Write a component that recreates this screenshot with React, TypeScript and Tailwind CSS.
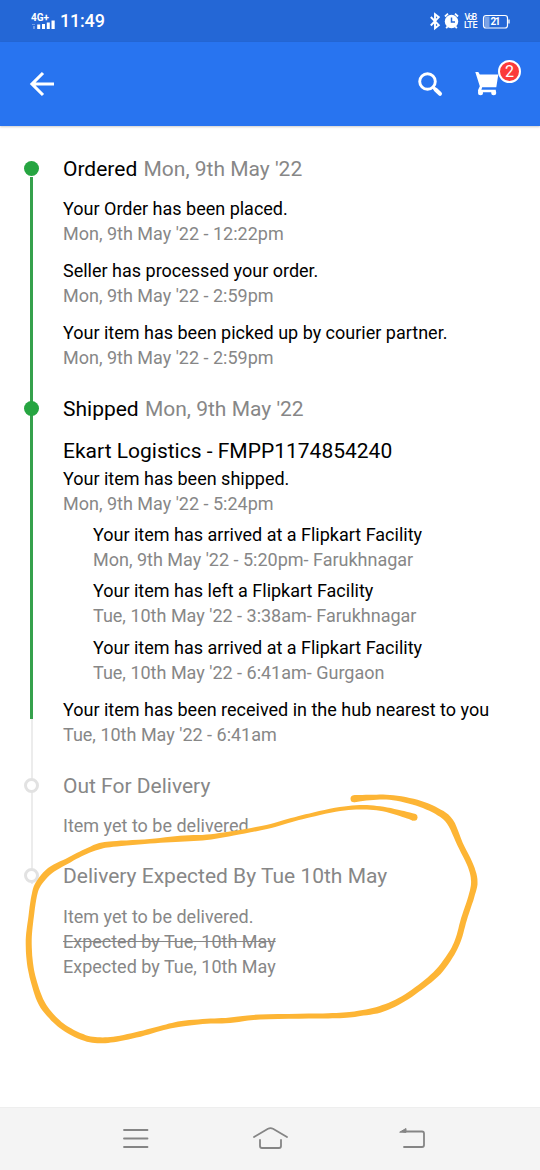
import React from "react";

type Pt = [number, number, number];

// Hand-drawn marker: centre points with the stroke width at each of them.
const marker: Pt[] = [
  [354, 798.7, 7], [373.3, 797.3, 5.2], [393.3, 797.7, 5], [416.7, 802.7, 6], [436.7, 811, 6.5],
  [450, 821.7, 7], [460, 844, 6], [470.7, 866, 6], [474.3, 881.7, 6.5], [471.3, 896.7, 6],
  [464, 919, 6], [458.7, 938.3, 6], [451.7, 953.3, 6], [438.3, 971.7, 6.5], [420, 987.3, 6],
  [400, 1000.7, 6], [380, 1009.3, 6.5], [360, 1013.3, 5.5], [343.3, 1015.3, 5.5], [316.7, 1016, 5],
  [260, 1017, 5], [230, 1020.3, 5.5], [206.7, 1021.3, 5], [181.7, 1023.7, 5.5], [163.3, 1027.7, 5],
  [140, 1034, 5.5], [116.7, 1039, 5.5], [100, 1040.3, 6], [85, 1038, 6], [66.7, 1029.3, 6],
  [53.3, 1018.3, 6], [41.7, 1003.3, 6.5], [34.3, 983.3, 6], [30, 963.3, 6], [28.7, 940, 6],
  [30.7, 920, 5.5], [34, 896.7, 5.5], [38.3, 884, 6], [50, 870.7, 6.5], [66.7, 861.3, 5.5],
  [83.3, 852.7, 5.2], [100, 846, 6], [116.7, 843.7, 5.5], [150, 841.3, 4.5], [180, 838.7, 6],
  [206.7, 837.3, 5.5], [233.3, 833.3, 4.5], [266.7, 827, 4], [288, 821, 4], [310, 815.3, 4],
  [340, 809, 4], [363.3, 807.3, 4.5], [383.3, 809, 4.5], [403.3, 814, 6], [414, 817.3, 7],
];

function smooth(points: Pt[], steps = 6): Pt[] {
  const out: Pt[] = [];
  for (let i = 0; i < points.length - 1; i++) {
    const p = [points[Math.max(0, i - 1)], points[i], points[i + 1], points[Math.min(points.length - 1, i + 2)]];
    for (let s = 0; s < steps; s++) {
      const t = s / steps;
      out.push(
        [0, 1, 2].map(
          (k) =>
            0.5 *
            (2 * p[1][k] +
              (p[2][k] - p[0][k]) * t +
              (2 * p[0][k] - 5 * p[1][k] + 4 * p[2][k] - p[3][k]) * t * t +
              (3 * p[1][k] - p[0][k] - 3 * p[2][k] + p[3][k]) * t * t * t),
        ) as Pt,
      );
    }
  }
  out.push(points[points.length - 1]);
  return out;
}

function outline(points: Pt[]): string {
  const pts = smooth(points);
  const left: string[] = [];
  const right: string[] = [];
  pts.forEach(([x, y, w], i) => {
    const a = pts[Math.max(0, i - 1)];
    const b = pts[Math.min(pts.length - 1, i + 1)];
    const len = Math.hypot(b[0] - a[0], b[1] - a[1]);
    const nx = (-(b[1] - a[1]) / len) * (w / 2);
    const ny = ((b[0] - a[0]) / len) * (w / 2);
    left.push(`${(x + nx).toFixed(1)} ${(y + ny).toFixed(1)}`);
    right.unshift(`${(x - nx).toFixed(1)} ${(y - ny).toFixed(1)}`);
  });
  return `M${left.concat(right).join("L")}Z`;
}

function Event({ text, time, className = "" }: { text: string; time: string; className?: string }) {
  return (
    <div className={className}>
      <p className="text-black">{text}</p>
      <p className="text-[#878787]">{time}</p>
    </div>
  );
}

function Step({ rail, dot, title, date, pending, className, children }: {
  rail: React.ReactNode; dot: string; title: string; date?: string; pending?: boolean; className: string; children: React.ReactNode;
}) {
  return (
    <section className={`flex ${className}`}>
      <div className="relative flex w-[63px] shrink-0 flex-col items-center">
        {rail}
        <span className={`absolute left-6 top-1.5 size-[15px] rounded-full ${dot}`} />
      </div>
      <div className="min-w-0 flex-1 whitespace-nowrap">
        <h2 className={`h-[28px] text-[21px] leading-[28px] ${pending ? "text-[#878787]" : "text-black"}`}>
          {title}
          {date && <span className="ml-px text-[#878787]"> {date}</span>}
        </h2>
        {children}
      </div>
    </section>
  );
}

function StatusBar() {
  return (
    <div className="flex h-[42px] items-center bg-[#2467d6] text-white">
      <svg className="ml-[30px] h-[20px] w-[27px] shrink-0" viewBox="0 0 27 20" fill="#fff">
        <text x="1" y="9.5" fontFamily="Roboto, sans-serif" fontSize="10" fontWeight="700" textLength="18">4G+</text>
        <path d="M7.200 13.500h3v4.500h-3zM12 13h3v5h-3zM16.800 11.500h3v6.500h-3zM21.500 9.500h3.200v8.500h-3.200z" />
        <path d="M2 13h3v1H2zM3 15h2v3H3z" opacity=".35" />
      </svg>
      <span className="ml-[3px] text-[18px] font-medium leading-[22px] tracking-[-0.2px]">11:49</span>
      <svg className="ml-auto mr-[29px] h-[20px] w-[82px]" viewBox="0 0 82 20" fill="none">
        <path d="M1.800 6l8 8.200L6 17.200V3.200l3.800 3-8 8.300" stroke="#fff" strokeWidth="1.900" />
        <circle cx="22.500" cy="10.500" r="6.700" fill="#fff" />
        <path d="M16 5.500l3-2.800M29 5.500l-3-2.800M18.500 15.500l-1.300 1.800M26.500 15.500l1.300 1.800" stroke="#fff" strokeWidth="1.800" />
        <path d="M22.500 6.500v4.500h3.500" stroke="#2467d6" strokeWidth="1.500" />
        <g fill="#fff" fontFamily="Roboto, sans-serif" fontWeight="500">
          <text x="35.500" y="9.300" fontSize="8.500" textLength="12.500">VoB</text>
          <text x="35" y="17.300" fontSize="9" textLength="13.500">LTE</text>
        </g>
        <rect x="54.500" y="4.500" width="24" height="12.500" rx="2.500" stroke="#fff" strokeWidth="1.200" />
        <rect x="55.500" y="5.500" width="5" height="10.500" fill="#fff" opacity=".4" />
        <path d="M80 8.500v4" stroke="#fff" strokeWidth="1.300" />
        <text x="61.500" y="14.300" fill="#fff" fontFamily="Roboto, sans-serif" fontSize="10" fontWeight="700" textLength="10">21</text>
      </svg>
    </div>
  );
}

function AppBar() {
  return (
    <header className="flex h-[84px] items-center bg-[#2874f0] shadow-[0_1px_2px_rgba(0,0,0,0.2)]">
      <svg className="ml-[28px] size-7" viewBox="0 0 28 28" fill="none" stroke="#fff" strokeWidth="3.100">
        <path d="M26 14H4M15 3L4 14l11 11" />
      </svg>
      <svg className="ml-auto size-7" viewBox="0 0 28 28" fill="none" stroke="#fff">
        <circle cx="11.500" cy="11.500" r="7.800" strokeWidth="2.900" />
        <path d="M17 17l2 2" strokeWidth="3" />
        <path d="M19.500 19.500l4.500 4.300" strokeWidth="4" strokeLinecap="round" />
      </svg>
      <div className="relative ml-[30px] mr-[38px]">
        <svg className="size-7" viewBox="0 0 28 28" fill="#fff">
          <path d="M1.300 2h3l1.500 2.500h18.500L22.300 17.200H8.200l-.8 2.600h14.400v2.400H5.500c-1.700 0-1.800-1.400-1.100-2.900l1.400-3z" />
          <circle cx="6.500" cy="22.800" r="2.500" />
          <circle cx="19.700" cy="22.800" r="2.500" />
        </svg>
        <span className="absolute -top-[10px] left-[24px] flex size-[23px] items-center justify-center rounded-full border-2 border-white bg-[#fb3a3a] text-[16px] leading-none text-white">
          2
        </span>
      </div>
    </header>
  );
}

export default function App() {
  return (
    <div className="relative flex h-[1170px] w-[540px] flex-col overflow-hidden bg-white font-[Roboto,sans-serif]">
      <StatusBar />
      <AppBar />
      <main className="flex-1 pt-[29px] text-[18px] leading-[25px]">
        <Step className="h-[240px]" dot="bg-[#26a541]" title="Ordered" date="Mon, 9th May '22"
          rail={<span className="mt-[22px] w-[3px] flex-1 bg-[#35a14c]" />}>
          <Event className="mt-[13px]" text="Your Order has been placed." time="Mon, 9th May '22 - 12:22pm" />
          <Event className="mt-[12px]" text="Seller has processed your order." time="Mon, 9th May '22 - 2:59pm" />
          <Event className="mt-[12px]" text="Your item has been picked up by courier partner." time="Mon, 9th May '22 - 2:59pm" />
        </Step>
        <Step className="h-[377px]" dot="bg-[#26a541]" title="Shipped" date="Mon, 9th May '22"
          rail={<><span className="h-[324px] w-[3px] bg-[#35a14c]" /><span className="w-0.5 flex-1 bg-[#ececec]" /></>}>
          <p className="mt-[14px] h-[28px] text-[21px] leading-[28px] text-black">Ekart Logistics - FMPP1174854240</p>
          <Event className="mt-px" text="Your item has been shipped." time="Mon, 9th May '22 - 5:24pm" />
          <div className="ml-[30px] mt-[6px] flex flex-col gap-[6px]">
            <Event text="Your item has arrived at a Flipkart Facility" time="Mon, 9th May '22 - 5:20pm- Farukhnagar" />
            <Event text="Your item has left a Flipkart Facility" time="Tue, 10th May '22 - 3:38am- Farukhnagar" />
            <Event className="pt-px" text="Your item has arrived at a Flipkart Facility" time="Tue, 10th May '22 - 6:41am- Gurgaon" />
          </div>
          <Event className="mt-[12px]" text="Your item has been received in the hub nearest to you" time="Tue, 10th May '22 - 6:41am" />
        </Step>
        <Step pending className="h-[90px]" dot="border-[3px] border-[#e2e2e2] bg-white" title="Out For Delivery"
          rail={<span className="w-0.5 flex-1 bg-[#ececec]" />}>
          <p className="mt-[13px] text-[#878787]">Item yet to be delivered.</p>
        </Step>
        <Step pending className="" dot="border-[3px] border-[#e2e2e2] bg-white" title="Delivery Expected By Tue 10th May"
          rail={<span className="h-[22px] w-0.5 bg-[#ececec]" />}>
          <div className="mt-[14px] text-[#878787]">
            <p>Item yet to be delivered.</p>
            <p className="line-through">Expected by Tue, 10th May</p>
            <p>Expected by Tue, 10th May</p>
          </div>
        </Step>
      </main>
      <nav className="flex h-[63px] items-center border-t border-[#eeeeee] bg-[#f4f4f4]">
        <svg className="h-[62px] w-full" viewBox="0 0 540 62" fill="none" stroke="#858585" strokeWidth="1.800" strokeLinecap="round" strokeLinejoin="round">
          <path d="M124 22h23.500M124 30.500h23.500M124 39h23.500" />
          <path d="M254 29l14-8.200q2.500-1.300 5 0L287 29M260 32v6q0 2 2 2h17q2 0 2-2v-6" />
          <path d="M404 39h18q2 0 2-2V25.500q0-2-2-2h-18" />
          <path d="M400 24l6-3.500V24z" fill="#858585" strokeWidth="1" />
        </svg>
      </nav>
      <svg className="pointer-events-none absolute inset-0" width="540" height="1170" viewBox="0 0 540 1170" fill="#fdb535">
        <path d={outline(marker)} />
        <circle cx="354" cy="798.700" r="3.500" />
        <circle cx="414" cy="817.300" r="3.500" />
      </svg>
    </div>
  );
}
